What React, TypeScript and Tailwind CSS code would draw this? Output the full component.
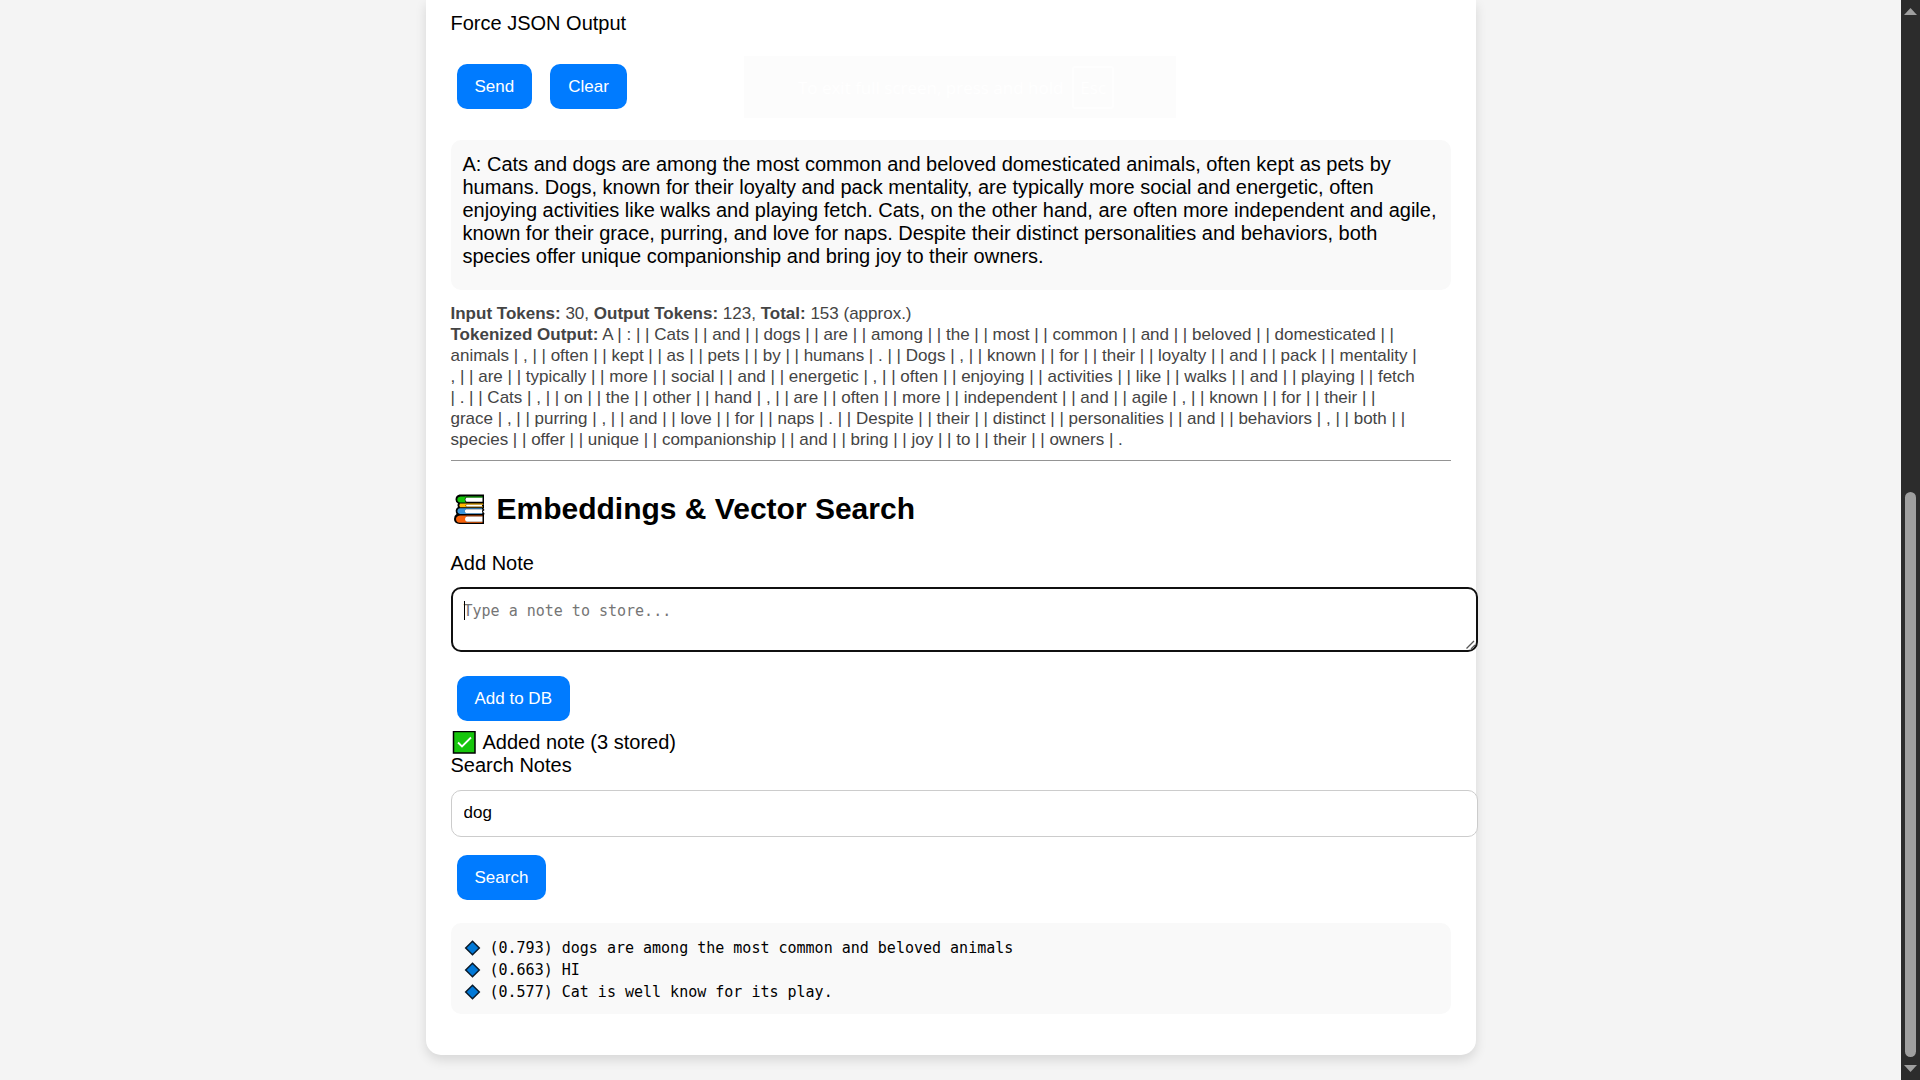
import React from "react";

const answer =
  "A: Cats and dogs are among the most common and beloved domesticated animals, often kept as pets by humans. Dogs, known for their loyalty and pack mentality, are typically more social and energetic, often enjoying activities like walks and playing fetch. Cats, on the other hand, are often more independent and agile, known for their grace, purring, and love for naps. Despite their distinct personalities and behaviors, both species offer unique companionship and bring joy to their owners.";

const tokenLines = [
  "A | : | | Cats | | and | | dogs | | are | | among | | the | | most | | common | | and | | beloved | | domesticated | |",
  "animals | , | | often | | kept | | as | | pets | | by | | humans | . | | Dogs | , | | known | | for | | their | | loyalty | | and | | pack | | mentality |",
  ", | | are | | typically | | more | | social | | and | | energetic | , | | often | | enjoying | | activities | | like | | walks | | and | | playing | | fetch",
  "| . | | Cats | , | | on | | the | | other | | hand | , | | are | | often | | more | | independent | | and | | agile | , | | known | | for | | their | |",
  "grace | , | | purring | , | | and | | love | | for | | naps | . | | Despite | | their | | distinct | | personalities | | and | | behaviors | , | | both | |",
  "species | | offer | | unique | | companionship | | and | | bring | | joy | | to | | their | | owners | .",
];

const results = [
  { score: "0.793", text: "dogs are among the most common and beloved animals" },
  { score: "0.663", text: "HI" },
  { score: "0.577", text: "Cat is well know for its play." },
];

function BlueButton({ children }: { children: React.ReactNode }) {
  return (
    <button
      type="button"
      className="rounded-[10px] bg-[#007bff] px-[18px] py-3 text-[17px] leading-[21px] text-white"
    >
      {children}
    </button>
  );
}

function BooksIcon() {
  return (
    <svg width="37" height="34" viewBox="0 0 37 34" aria-hidden="true" className="shrink-0">
      <path
        d="M8.500 2.500 H33 V11.500 L32.500 12.500 H33 V16 L32.500 16.500 L33.500 18 L32 19.500 L33.500 21.500 L33 23 V32 H8.500 Q3 31.500 3 27 Q3 23.500 5.500 22 Q4.500 20 4.800 18 Q5.200 16.200 7 15 Q6 13 7 11.500 Q4.500 10.500 4.500 7.500 Q4.500 3.500 8.500 2.500Z"
        fill="#000"
      />
      <path d="M9.500 4.500 H15 Q12.500 7.500 15 10.500 H9.500 Q6.300 10 6.300 7.500 Q6.300 5 9.500 4.500Z" fill="#16c60c" />
      <path d="M15.500 5.500 H31.500 V9.800 H15.500 Q13.200 7.500 15.500 5.500Z" fill="#fff" />
      <path d="M14 4.500 H31.500 V5.500 H14Z" fill="#16c60c" />
      <path d="M9 11.600 H32 V12.700 H15 Q14 13.700 15 14.500 H32 V15.300 H9 Q7.500 13.500 9 11.600Z" fill="#ffb900" />
      <path d="M15.500 12.800 H31 V14.400 H15.500 Q14.500 13.600 15.500 12.800Z" fill="#fff" />
      <path d="M9 16.300 H31 V17.200 H15 Q12.500 19 15 21.200 H31 V22 H9 Q6.300 21.500 6.300 19 Q6.300 16.800 9 16.300Z" fill="#3a96dd" />
      <path d="M15 17.200 H31.500 Q30.500 19 31.500 21.200 H15 Q12.500 19 15 17.200Z" fill="#fff" />
      <path d="M9 23.500 H31.500 V24.500 H15 V29.800 H31.500 V30.700 H9 Q5 30.500 5 27 Q5 24 9 23.500Z" fill="#f7630c" />
      <path d="M15.500 24.500 H31.500 V29.800 H15.500 Q12.500 27.200 15.500 24.500Z" fill="#fff" />
    </svg>
  );
}

function CheckIcon() {
  return (
    <svg width="27" height="23" viewBox="0 0 27 23" aria-hidden="true" className="shrink-0">
      <rect x="2.500" y="0.500" width="21.500" height="21.500" fill="#16c60c" stroke="#000" strokeWidth="1.500" />
      <path d="M7 11.500 L11 15.500 L20 6.500" fill="none" stroke="#fff" strokeWidth="1.800" />
    </svg>
  );
}

function DiamondIcon() {
  return (
    <svg width="18" height="16" viewBox="0 0 18 16" aria-hidden="true" className="shrink-0">
      <path d="M8.500 1.200 L15.300 8 L8.500 14.800 L1.700 8Z" fill="#0078d7" stroke="#0a1a2a" strokeWidth="1.500" />
    </svg>
  );
}

export default function App() {
  return (
    <div className="flex min-h-screen bg-[#f4f4f4] font-['Liberation_Sans',Arial,sans-serif] text-[20px] leading-[23px] text-black">
      <div className="relative min-w-0 flex-1 pb-[25px]">
        <main className="mx-auto max-w-[1050px] rounded-b-[15px] bg-white px-[25px] pt-3 pb-[41px] shadow-[0_5px_12px_rgba(0,0,0,0.12)]">
          <p>Force JSON Output</p>
          <div className="mt-[29px] flex gap-[18px] px-1.5">
            <BlueButton>Send</BlueButton>
            <BlueButton>Clear</BlueButton>
          </div>

          <p className="mt-[31px] rounded-[10px] bg-[#f9f9f9] px-3 pt-[13px] pb-[22px]">{answer}</p>

          <div className="mt-[13px] text-[17px] leading-[21px] text-[#444]">
            <p>
              <b>Input Tokens:</b> 30, <b>Output Tokens:</b> 123, <b>Total:</b> 153 (approx.)
            </p>
            <p>
              <b>Tokenized Output:</b>{" "}
              {tokenLines.map((line, i) => (
                <React.Fragment key={i}>
                  {line}
                  {i < tokenLines.length - 1 && <br />}
                </React.Fragment>
              ))}
            </p>
          </div>

          <hr className="mt-[10px] border-t border-[#949494]" />

          <h2 className="mt-[31px] flex items-center text-[30px] leading-[34px] font-bold">
            <BooksIcon />
            <span className="ml-[9px]">Embeddings &amp; Vector Search</span>
          </h2>

          <label htmlFor="note" className="mt-[26px] block">
            Add Note
          </label>
          <div className="relative mt-3 w-[calc(100%+27px)]">
            <textarea
              id="note"
              placeholder="Type a note to store..."
              className="block h-[65px] w-full resize-none rounded-[10px] border-2 border-[#101010] bg-white px-[11px] py-3 font-['DejaVu_Sans_Mono',monospace] text-[15px] leading-[20px] outline-none placeholder:text-[#757575]"
            />
            <span className="absolute top-[14px] left-[13px] h-[19px] w-px bg-black" />
            <svg className="absolute right-[2px] bottom-[2px]" width="10" height="10" viewBox="0 0 10 10" aria-hidden="true">
              <path d="M0.500 8.500 L8 1 M5 9 L9 5" stroke="#555" strokeWidth="1.300" />
            </svg>
          </div>

          <div className="mt-6 px-1.5">
            <BlueButton>Add to DB</BlueButton>
          </div>
          <p className="mt-[10px] flex items-center">
            <CheckIcon />
            <span className="ml-[5px]">Added note (3 stored)</span>
          </p>

          <label htmlFor="search" className="block">
            Search Notes
          </label>
          <input
            id="search"
            type="text"
            defaultValue="dog"
            className="mt-[13px] block h-[47px] w-[calc(100%+27px)] rounded-[10px] border border-[#ccc] bg-white px-3 pb-0.5 text-[17px] outline-none"
          />
          <div className="mt-[18px] px-1.5">
            <BlueButton>Search</BlueButton>
          </div>

          <ul className="mt-[23px] rounded-[10px] bg-[#f9f9f9] px-[13px] pt-[14px] pb-[11px] font-['DejaVu_Sans_Mono',monospace] text-[15px] leading-[22px]">
            {results.map((r) => (
              <li key={r.score} className="flex items-center">
                <DiamondIcon />
                <span className="ml-2">
                  ({r.score}) {r.text}
                </span>
              </li>
            ))}
          </ul>
        </main>
      </div>

      <div className="flex w-[19px] flex-col items-center bg-[#2c2c2c]" aria-hidden="true">
        <svg width="19" height="24" viewBox="0 0 19 24">
          <path d="M9.500 8 L16 15 H3Z" fill="#9f9f9f" />
        </svg>
        <div className="flex flex-1 flex-col justify-end">
          <div className="h-[54.700%] w-[11px] rounded-full bg-[#9f9f9f]" />
        </div>
        <svg width="19" height="23" viewBox="0 0 19 23">
          <path d="M3 8 H16 L9.500 15Z" fill="#9f9f9f" />
        </svg>
      </div>

      <div className="absolute top-14 left-1/2 flex h-[62px] w-[432px] -translate-x-1/2 items-center justify-center gap-[9px] bg-[#fcfcfc] pr-2 font-['Open_Sans',sans-serif] text-[17px] text-white">
        <span>To exit full screen, press and hold</span>
        <kbd className="rounded-[3px] border-2 border-[#fefefe] px-1.5 py-2 font-['Open_Sans',sans-serif]">Esc</kbd>
      </div>
    </div>
  );
}
